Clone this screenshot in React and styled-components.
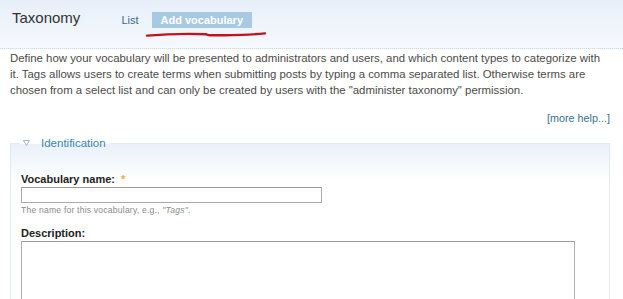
import styled, { createGlobalStyle } from "styled-components";

const GlobalStyle = createGlobalStyle`
  html, body {
    margin: 0;
    padding: 0;
    background: #fff;
  }
  body {
    font-family: "Liberation Sans", Arial, sans-serif;
    font-size: 11px;
    color: #4a4a4a;
  }
`;

const Header = styled.div`
  position: relative;
  display: flex;
  align-items: flex-start;
  height: 38px;
  padding: 10px 0 0 12px;
  background: linear-gradient(#e7eff9, #f6f9fd);
  border-bottom: 1px dotted #cfdbe7;
`;

const Title = styled.h1`
  margin: 0;
  font-size: 15px;
  font-weight: normal;
  line-height: 16px;
  color: #333;
`;

const Tabs = styled.ul`
  display: flex;
  align-items: center;
  gap: 13px;
  margin: 2px 0 0 41px;
  padding: 0;
  list-style: none;
`;

const Tab = styled.li`
  height: 16px;
  line-height: 16px;
  padding: ${(p) => (p.$active ? "0 9px" : "0")};
  background: ${(p) => (p.$active ? "#a8c9e3" : "transparent")};
  color: ${(p) => (p.$active ? "#fff" : "#3b6a88")};
  font-weight: ${(p) => (p.$active ? "bold" : "normal")};
  font-size: 11px;
`;

const Scribble = styled.svg`
  position: absolute;
  left: 144px;
  top: 30px;
`;

const Content = styled.div`
  padding: 1px 13px 0 10px;
`;

const Help = styled.p`
  margin: 0;
  line-height: 16px;
  font-size: 11.4px;
  color: #4a4a4a;
`;

const MoreHelp = styled.div`
  margin-top: 12px;
  text-align: right;
  line-height: 16px;
  font-size: 10.8px;
  color: #3a6f8c;
`;

const Fieldset = styled.fieldset`
  margin: 9px 0 0;
  padding: 20px 10px 20px;
  border: 1px solid #e2eaf2;
  background: linear-gradient(#e9f1f9 0px, #f7fafd 24px, #fff 40px);
`;

const Legend = styled.legend`
  display: flex;
  align-items: center;
  margin-left: -1px;
  padding: 0 4px 0 3px;
  line-height: 16px;
  font-size: 11.5px;
  color: #3a86aa;
`;

const Toggle = styled.svg`
  margin-right: 11px;
`;

const Item = styled.div`
  margin-bottom: 9px;
`;

const Label = styled.label`
  display: block;
  line-height: 16px;
  font-size: 11px;
  font-weight: bold;
  color: #222;
`;

const Required = styled.span`
  margin-left: 6px;
  color: #e9b13c;
  font-weight: bold;
`;

const TextInput = styled.input`
  display: block;
  box-sizing: border-box;
  width: 301px;
  height: 16px;
  margin: 0;
  padding: 0 3px;
  border: 1px solid #a9a9a9;
  border-top-color: #9a9a9a;
  background: #fff;
`;

const Hint = styled.div`
  line-height: 12px;
  margin-top: 1px;
  font-size: 8.6px;
  color: #8a8a8a;
  letter-spacing: 0.2px;
`;

const TextArea = styled.textarea`
  display: block;
  box-sizing: border-box;
  width: 554px;
  height: 90px;
  margin: 0;
  border: 1px solid #b0b0b0;
  border-top-color: #9c9c9c;
  resize: none;
  background: #fff;
`;

const App = () => {
  return (
    <>
      <GlobalStyle />
      <Header>
        <Title>Taxonomy</Title>
        <Tabs>
          <Tab>List</Tab>
          <Tab $active>Add vocabulary</Tab>
        </Tabs>
        <Scribble width="124" height="10" viewBox="0 0 124 10">
          <path
            d="M3 5.6 C20 4.2, 45 3.6, 62 4.2 C64 5.6, 66 5.4, 80 5.2 C98 5, 110 4.4, 121 3.4"
            fill="none"
            stroke="#c3121c"
            strokeWidth="2.4"
            strokeLinecap="round"
          />
        </Scribble>
      </Header>
      <Content>
        <Help>
          Define how your vocabulary will be presented to administrators and users, and which content
          types to categorize with it. Tags allows users to create terms when submitting posts by typing
          a comma separated list. Otherwise terms are chosen from a select list and can only be created
          by users with the "administer taxonomy" permission.
        </Help>
        <MoreHelp>[more help...]</MoreHelp>
        <Fieldset>
          <Legend>
            <Toggle width="7" height="6" viewBox="0 0 7 6">
              <polygon points="0.5,0.5 6.5,0.5 3.5,5.5" fill="none" stroke="#a3b3bf" strokeWidth="1" />
            </Toggle>
            Identification
          </Legend>
          <Item>
            <Label>
              Vocabulary name:<Required>*</Required>
            </Label>
            <TextInput type="text" />
            <Hint>
              The name for this vocabulary, e.g., <i>"Tags"</i>.
            </Hint>
          </Item>
          <Item>
            <Label>Description:</Label>
            <TextArea />
          </Item>
        </Fieldset>
      </Content>
    </>
  );
};

export default App;
